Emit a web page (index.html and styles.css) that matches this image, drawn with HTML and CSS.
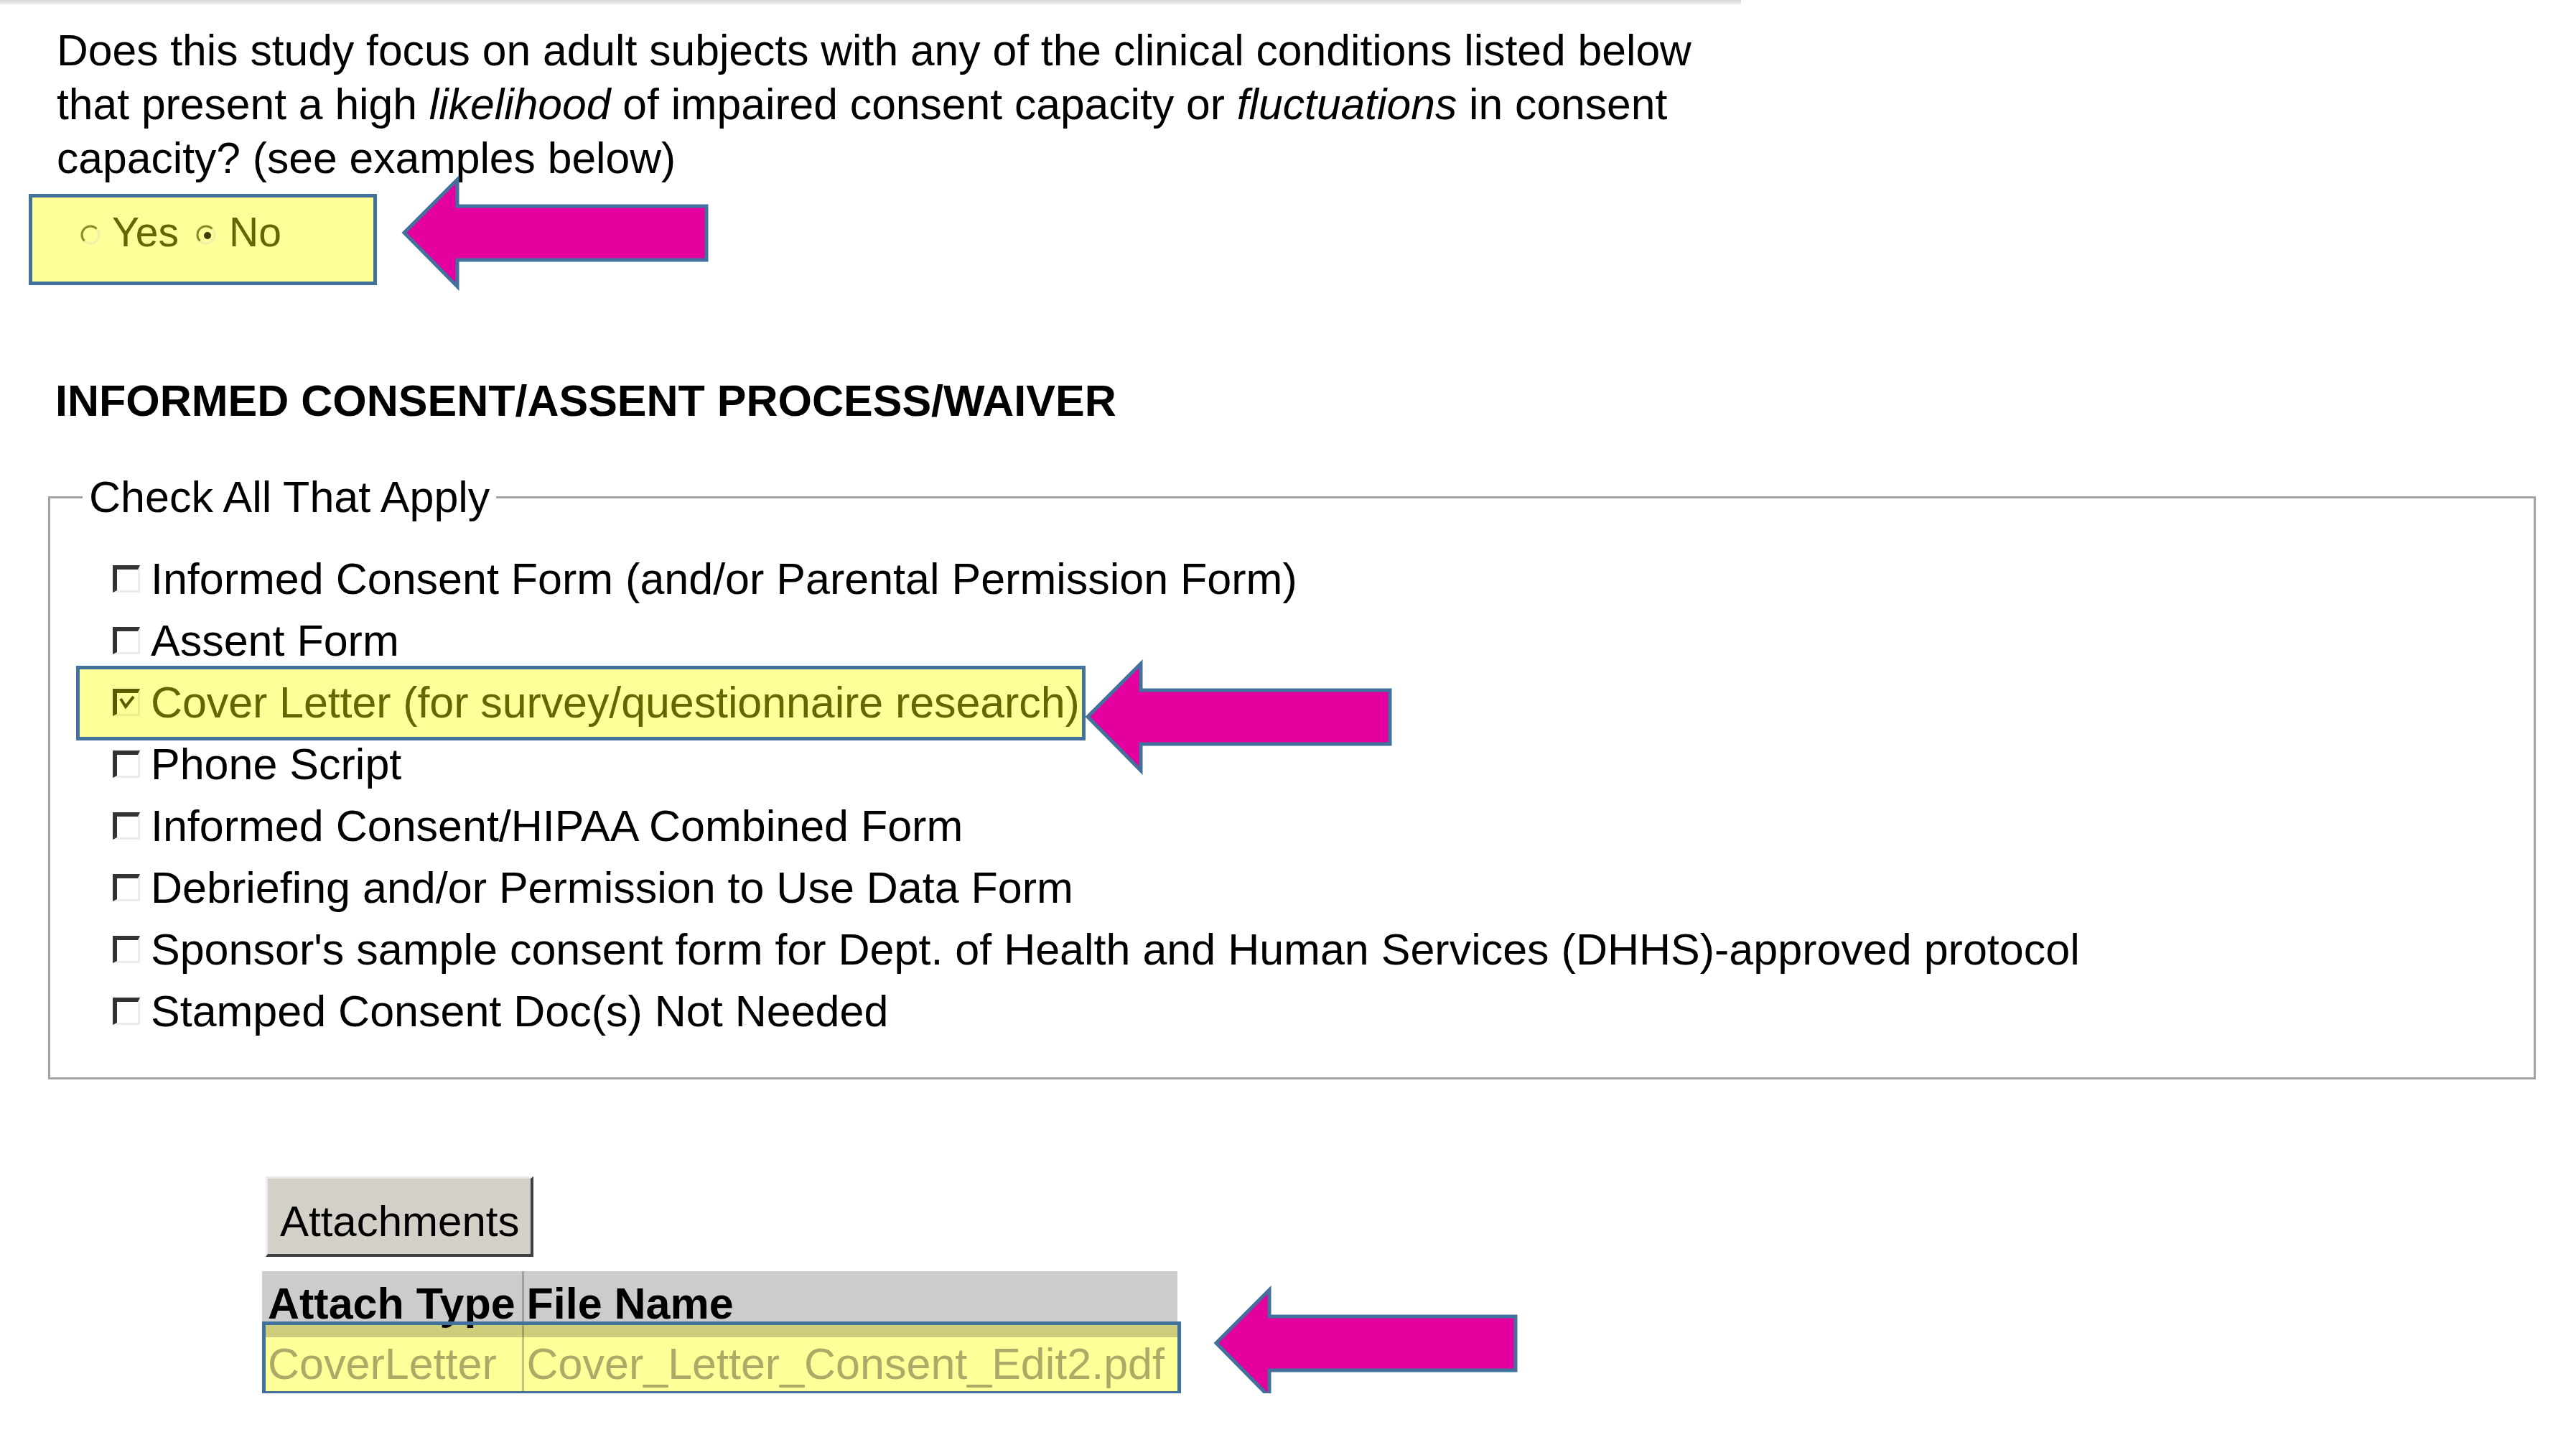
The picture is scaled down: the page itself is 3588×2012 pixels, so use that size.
FILE: index.html
```html
<!DOCTYPE html>
<html lang="en">
<head>
<meta charset="utf-8">
<title>Informed Consent</title>
<link rel="stylesheet" href="styles.css">
</head>
<body>
<div class="topbar"></div>
<p class="question">Does this study focus on adult subjects with any of the clinical conditions listed below<br>that present a high <i>likelihood</i> of impaired consent capacity or <i>fluctuations</i> in consent<br>capacity? (see examples below)</p>

<div class="yesno">
  <svg class="radio" viewBox="0 0 34 34"><circle cx="17" cy="17" r="12" fill="none" stroke="#f0f0a8" stroke-width="3"/><path d="M8.5 25.5 A12 12 0 0 1 25.5 8.5" fill="none" stroke="#8a8a2a" stroke-width="3"/></svg>
  <span class="yes-label">Yes</span>
  <svg class="radio" viewBox="0 0 34 34"><circle cx="17" cy="17" r="12" fill="none" stroke="#f0f0a8" stroke-width="3"/><path d="M8.5 25.5 A12 12 0 0 1 25.5 8.5" fill="none" stroke="#8a8a2a" stroke-width="3"/><circle cx="19" cy="18" r="5" fill="#3c3c00"/></svg>
  <span class="no-label">No</span>
  <svg class="arrow arrow-yesno" width="428" height="156" viewBox="0 0 428 156"><polygon points="3,77 77,3 77,40 424,40 424,115 77,115 77,152" fill="#e3009f" stroke="#41719c" stroke-width="5"/></svg>
</div>

<h2 class="section-title">INFORMED CONSENT/ASSENT PROCESS/WAIVER</h2>

<fieldset class="apply">
  <legend>Check All That Apply</legend>
  <ul class="options">
    <li class="option"><span class="cb"></span><span>Informed Consent Form (and/or Parental Permission Form)</span></li>
    <li class="option"><span class="cb"></span><span>Assent Form</span></li>
    <li class="option">
      <span class="option-hl">
        <span class="cb cb-checked"><svg viewBox="0 0 30 30" width="30" height="30"><path d="M5 8 L12 19 L23 5" fill="none" stroke="#5a5a00" stroke-width="4"/></svg></span>
        <span>Cover Letter (for survey/questionnaire research)</span>
        <svg class="arrow arrow-cover" width="428" height="156" viewBox="0 0 428 156"><polygon points="3,77 77,3 77,40 424,40 424,115 77,115 77,152" fill="#e3009f" stroke="#41719c" stroke-width="5"/></svg>
      </span>
    </li>
    <li class="option"><span class="cb"></span><span>Phone Script</span></li>
    <li class="option"><span class="cb"></span><span>Informed Consent/HIPAA Combined Form</span></li>
    <li class="option"><span class="cb"></span><span>Debriefing and/or Permission to Use Data Form</span></li>
    <li class="option"><span class="cb"></span><span>Sponsor's sample consent form for Dept. of Health and Human Services (DHHS)-approved protocol</span></li>
    <li class="option"><span class="cb"></span><span>Stamped Consent Doc(s) Not Needed</span></li>
  </ul>
</fieldset>

<div class="attach">
  <button class="attach-btn" type="button">Attachments</button>
  <div class="table-wrap">
    <table class="attach-table">
      <colgroup><col class="col-type"><col class="col-name"></colgroup>
      <thead>
        <tr><th>Attach Type</th><th>File Name</th></tr>
      </thead>
      <tbody>
        <tr><td>CoverLetter</td><td>Cover_Letter_Consent_Edit2.pdf</td></tr>
      </tbody>
    </table>
    <div class="table-hl"></div>
    <svg class="arrow arrow-table" width="428" height="156" viewBox="0 0 428 156"><polygon points="3,77 77,3 77,40 420,40 420,115 77,115 77,152" fill="#e3009f" stroke="#41719c" stroke-width="5"/></svg>
  </div>
</div>
</body>
</html>
```

FILE: styles.css
```css
* { box-sizing: border-box; }

body {
  margin: 0;
  background: #ffffff;
  font-family: "Liberation Sans", Arial, sans-serif;
  color: #000000;
}

.topbar {
  width: 2425px;
  height: 6px;
  background: linear-gradient(#d6d6d6, #ededed);
}

.question {
  margin: 27px 0 0;
  padding-left: 79px;
  font-size: 60.6px;
  line-height: 75px;
}

.yesno {
  position: relative;
  display: flex;
  align-items: flex-start;
  margin: 12px 0 0 40px;
  width: 485px;
  height: 127px;
  padding: 11px 0 0 64px;
  border: 5px solid #41719c;
  background: #ffff99;
  color: #666600;
  font-size: 57px;
  line-height: 75px;
}

.radio {
  flex: none;
  width: 34px;
  height: 34px;
  margin-top: 24px;
}

.yes-label { margin: 0 21px 0 13px; }
.no-label { margin-left: 15px; }

.arrow {
  position: absolute;
  overflow: visible;
}

.arrow-yesno {
  left: calc(100% + 40px);
  top: -28px;
}

.section-title {
  margin: 124px 0 0;
  padding-left: 77px;
  font-size: 61px;
  line-height: 75px;
  font-weight: bold;
}

.apply {
  margin: 62px 56px 0 67px;
  padding: 37px 20px 49px 45px;
  border: 3px solid #a3a3a3;
}

.apply legend {
  padding: 0 9px;
  font-size: 61px;
  line-height: 68px;
}

.options {
  list-style: none;
  margin: 0;
  padding: 0 0 0 42px;
}

.option {
  display: flex;
  align-items: flex-start;
  height: 86px;
  font-size: 61px;
  line-height: 86px;
  white-space: nowrap;
}

.cb {
  flex: none;
  width: 38px;
  height: 38px;
  margin: 24px 15px 0 0;
  border-style: solid;
  border-width: 6px 3px 3px 6px;
  border-color: #333333 #ececec #ececec #333333;
  background: #ffffff;
}

.option-hl {
  position: relative;
  display: flex;
  align-items: flex-start;
  height: 104px;
  margin: -8px 0 -10px -51px;
  padding: 3px 3px 5px 46px;
  border: 5px solid #41719c;
  background: #ffff99;
  color: #666600;
  letter-spacing: -0.1px;
}

.cb-checked {
  display: block;
  border-color: #5a5a00 #eded8c #eded8c #5a5a00;
  background: #ffff99;
}

.cb-checked svg { display: block; }

.arrow-cover {
  left: calc(100% + 5px);
  top: -11px;
}

.attach { margin-top: 135px; }

.attach-btn {
  display: block;
  width: 373px;
  margin: 0 0 0 370px;
  padding: 25px 16px 10px 17px;
  text-align: left;
  font-family: "Liberation Sans", Arial, sans-serif;
  font-size: 60px;
  line-height: 70px;
  color: #000000;
  background: #d4d0c8;
  border-style: solid;
  border-width: 3px 4px 4px 3px;
  border-color: #ececec #404040 #404040 #ececec;
  border-radius: 0;
}

.table-wrap {
  position: relative;
  width: 1275px;
  margin: 20px 0 0 365px;
}

.attach-table {
  width: 1275px;
  border-collapse: collapse;
  table-layout: fixed;
  font-size: 61px;
  line-height: 70px;
}

.col-type { width: 363px; }
.col-name { width: 912px; }

.attach-table th {
  padding: 10px 0 12px 8px;
  background: #cccccc;
  text-align: left;
  vertical-align: top;
  font-weight: bold;
  white-space: nowrap;
}

.attach-table th + th {
  border-left: 3px solid #a0a0a0;
  padding-left: 4px;
}

.attach-table td {
  padding: 2px 0 6px 8px;
  color: #ababab;
  vertical-align: top;
  white-space: nowrap;
}

.attach-table td + td {
  border-left: 3px solid #c4c4c4;
  padding-left: 4px;
}

.table-hl {
  position: absolute;
  left: 0;
  top: 70px;
  width: 1280px;
  height: 102px;
  border: 5px solid #41719c;
}

.table-hl::before {
  content: "";
  position: absolute;
  inset: 0;
  background: #ffff99;
  mix-blend-mode: multiply;
}

.arrow-table {
  left: 1326px;
  top: 23px;
}
```
